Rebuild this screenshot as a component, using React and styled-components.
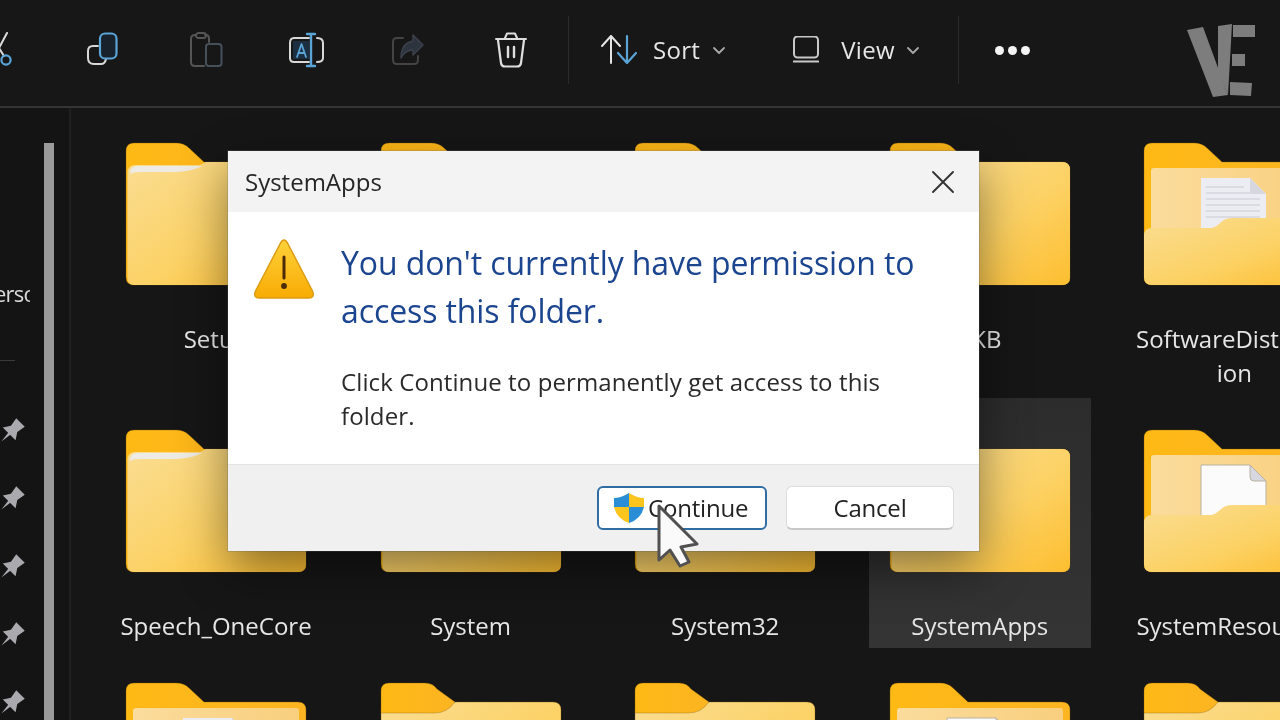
import React, { useId } from "react";
import styled, { createGlobalStyle } from "styled-components";

const Global = createGlobalStyle`
  html, body { margin: 0; padding: 0; background: #161617; }
  * { box-sizing: border-box; }
`;

const FONT = `"Open Sans", "Noto Sans", sans-serif`;

const Page = styled.div`
  width: 1280px;
  height: 720px;
  overflow: hidden;
  position: relative;
  background: #161617;
  font-family: ${FONT};
  display: flex;
  flex-direction: column;
  filter: blur(0.4px);
`;

const Toolbar = styled.header`
  height: 108px;
  flex: none;
  display: flex;
  align-items: center;
  padding-bottom: 6px;
  border-bottom: 2px solid #343435;
  background: #171718;
`;

const IconSlot = styled.span`
  width: 36px;
  height: 36px;
  flex: none;
  display: block;
  margin-right: 66px;
  &:first-child { margin-left: -18px; }
  &:nth-child(5) { margin-right: 67px; }
  &:nth-child(6) { margin-right: 39px; }
  svg { display: block; overflow: visible; }
`;

const Separator = styled.span`
  width: 1px;
  height: 68px;
  flex: none;
  background: #2b2b2c;
  margin-left: ${(p) => p.$left || 0}px;
`;

const MenuButton = styled.span`
  display: flex;
  align-items: center;
  flex: none;
  color: #e6e6e6;
  font-size: 24px;
  margin-left: ${(p) => p.$left}px;
  svg { display: block; flex: none; }
`;

const MenuLabel = styled.span`
  margin: -2px ${(p) => p.$after}px 0 ${(p) => p.$before}px;
  letter-spacing: 0.3px;
`;

const Dots = styled.span`
  display: flex;
  gap: 4px;
  margin-left: 36px;
  flex: none;
`;

const Dot = styled.i`
  width: 9px;
  height: 9px;
  border-radius: 50%;
  background: #f4f4f4;
`;

const Logo = styled.svg`
  margin-left: auto;
  margin-right: 22px;
  margin-top: 22px;
  flex: none;
`;

const Body = styled.div`
  flex: 1;
  display: flex;
  min-height: 0;
`;

const Sidebar = styled.aside`
  width: 71px;
  flex: none;
  display: flex;
  border-right: 2px solid #202021;
  background: #141415;
`;

const SideList = styled.div`
  width: 44px;
  flex: none;
  display: flex;
  flex-direction: column;
`;

const SideLabel = styled.div`
  width: 30px;
  height: 34px;
  margin-top: 168px;
  overflow: hidden;
  white-space: nowrap;
  color: #dadada;
  font-size: 22px;
  line-height: 34px;
  letter-spacing: -0.8px;
  text-indent: -6px;
`;

const SideRule = styled.div`
  width: 15px;
  height: 1px;
  margin-top: 50px;
  background: #3a3a3a;
`;

const Pins = styled.div`
  display: flex;
  flex-direction: column;
  gap: 40px;
  margin-top: 56px;
`;

const Scrollbar = styled.div`
  width: 10px;
  flex: none;
  margin-top: 35px;
  background: #9a9a9a;
`;

const Grid = styled.main`
  flex: 1;
  display: grid;
  grid-template-columns: repeat(5, 222px);
  column-gap: 32.6px;
  row-gap: 3px;
  align-content: start;
  padding: 3px 0 0 34px;
  background: #161617;
`;

const Cell = styled.div`
  padding: 32px 21px 5px;
  background: ${(p) => (p.$selected ? "linear-gradient(180deg,#2c2c2d,#343435)" : "transparent")};
`;

const FolderArt = styled.svg`
  display: block;
  width: 180px;
  height: 142px;
  overflow: visible;
`;

const Label = styled.div`
  margin: 37px -21px 0;
  text-align: center;
  white-space: nowrap;
  color: #e6e6e6;
  font-size: 24px;
  line-height: 34px;
`;

const Dialog = styled.section`
  position: absolute;
  left: 228px;
  top: 151px;
  width: 751px;
  height: 400px;
  display: flex;
  flex-direction: column;
  background: #fff;
  box-shadow: 0 18px 46px rgba(0, 0, 0, 0.46), 0 0 0 1px rgba(130, 130, 130, 0.25);
`;

const DialogHead = styled.div`
  height: 61px;
  flex: none;
  display: flex;
  align-items: center;
  justify-content: space-between;
  padding: 0 24px 0 17px;
  background: #f3f3f3;
`;

const DialogTitle = styled.h2`
  margin: 0;
  font-size: 24px;
  font-weight: 400;
  color: #262626;
`;

const DialogMain = styled.div`
  flex: 1;
  display: flex;
  gap: 26px;
  padding: 26px 25px 0;
`;

const Warning = styled.svg`
  flex: none;
  display: block;
`;

const Copy = styled.div`
  display: flex;
  flex-direction: column;
  padding-top: 1px;
`;

const Heading = styled.h1`
  margin: 0;
  font-size: 32px;
  font-weight: 400;
  line-height: 48px;
  color: #1c4590;
  letter-spacing: -0.1px;
  white-space: nowrap;
`;

const Message = styled.p`
  margin: 30px 0 0;
  font-size: 24px;
  line-height: 34px;
  letter-spacing: 0.1px;
  color: #2a2a2a;
  white-space: nowrap;
`;

const DialogFoot = styled.div`
  height: 87px;
  flex: none;
  display: flex;
  justify-content: flex-end;
  align-items: flex-start;
  gap: 19px;
  padding: 21px 25px 0;
  background: #f0f0f0;
  border-top: 1px solid #e4e4e4;
`;

const Button = styled.div`
  position: relative;
  height: 44px;
  width: ${(p) => p.$w}px;
  display: flex;
  align-items: center;
  justify-content: ${(p) => (p.$primary ? "flex-start" : "center")};
  gap: 3px;
  padding-left: ${(p) => (p.$primary ? 14 : 0)}px;
  padding-bottom: 1px;
  background: #fff;
  border-radius: 6px;
  border: ${(p) => (p.$primary ? "2px solid #2f6da3" : "1px solid #dcdcdc")};
  ${(p) => (p.$primary ? "" : "border-bottom: 2px solid #c8c8c8;")}
  color: #222;
  font-size: 24px;
  letter-spacing: -0.2px;
`;

const Pointer = styled.svg`
  position: absolute;
  left: 57px;
  top: 15px;
  display: block;
  overflow: visible;
`;

const Svg = ({ children, ...rest }) => (
  <svg width="36" height="36" viewBox="0 0 36 36" fill="none" strokeLinecap="round" strokeLinejoin="round" {...rest}>
    {children}
  </svg>
);

const BLUE = "#5aa4d6";

const Scissors = () => (
  <Svg>
    <path d="M25 1 L17 16 L22 24" stroke="#dcdcdc" strokeWidth="2" />
    <circle cx="24" cy="28" r="4.6" stroke={BLUE} strokeWidth="2.2" />
  </Svg>
);
const CopyIcon = () => (
  <Svg>
    <path d="M14 14 H9 Q4 14 4 19 V26 Q4 32 10 32 H17 Q21 32 22 27" stroke="#d8d8d8" strokeWidth="2" />
    <rect x="16" y="1.5" width="16.5" height="25" rx="5" stroke={BLUE} strokeWidth="2.2" fill="#17222c" />
  </Svg>
);
const PasteIcon = () => (
  <Svg>
    <path d="M10 3 H9 Q5 3 5 7 V30 Q5 34 9 34 H18" stroke="#555" strokeWidth="2" />
    <path d="M23 10 V7 Q23 3 20 3 H19" stroke="#555" strokeWidth="2" />
    <rect x="10" y="1" width="10" height="5" rx="2.5" stroke="#555" strokeWidth="1.8" />
    <rect x="20" y="12" width="15.5" height="22" rx="3" stroke="#46505a" strokeWidth="2" />
  </Svg>
);
const RenameIcon = () => (
  <Svg>
    <path d="M21 6 H6 Q2 6 2 11 V26 Q2 30 6 30 H21" stroke="#d8d8d8" strokeWidth="2" />
    <path d="M29 6 Q35 6 35 11 V26 Q35 30 29 30" stroke="#d8d8d8" strokeWidth="2" />
    <rect x="5" y="9" width="16" height="18" fill="#1c2f40" />
    <path d="M9 25 L13.5 12 L18 25 M10.6 21 H16.4" stroke={BLUE} strokeWidth="1.8" />
    <path d="M19 2 H27 M19 34 H27 M23 2 V34" stroke={BLUE} strokeWidth="2.4" />
  </Svg>
);
const ShareIcon = () => (
  <Svg>
    <path d="M13 6 H7 Q3 6 3 10 V28 Q3 32 7 32 H24 Q28 32 28 28 V24" stroke="#444" strokeWidth="2" />
    <path d="M23 3 L33 13 L23 23 V18 Q15 18 11 26 Q11 11 23 9 Z" fill="#2e343e" stroke="#3c424d" strokeWidth="1.4" />
  </Svg>
);
const TrashIcon = () => (
  <Svg>
    <path d="M3 7 H33 M12 6 L14 1.5 H22 L24 6" stroke="#dedede" strokeWidth="2" />
    <path d="M5 8 L8 31 Q8.5 34.5 12 34.5 H24 Q27.5 34.5 28 31 L31 8" stroke="#dedede" strokeWidth="2.2" />
    <path d="M15 15 V25 M21 15 V25" stroke="#dedede" strokeWidth="2.4" />
  </Svg>
);
const SortIcon = () => (
  <svg width="36" height="32" viewBox="0 1 36 32" fill="none" strokeLinecap="round" strokeLinejoin="round">
    <path d="M10 30 V3 M1 13 L10 3 L19 13" stroke="#e4e4e4" strokeWidth="2" />
    <path d="M26 3 V29 M17 20 L26 30 L35 20" stroke={BLUE} strokeWidth="2.2" />
  </svg>
);
const ViewIcon = () => (
  <svg width="28" height="28" viewBox="0 1 28 28" fill="none">
    <rect x="2" y="1.5" width="24" height="21" rx="3.5" stroke="#c8c8c8" strokeWidth="2" />
    <path d="M1 26.5 H27" stroke="#c8c8c8" strokeWidth="2" />
  </svg>
);
const Chevron = () => (
  <svg width="14" height="9" viewBox="0 0 14 9" fill="none">
    <path d="M2 2 L7 7 L12 2" stroke="#a8a8a8" strokeWidth="1.8" strokeLinecap="round" strokeLinejoin="round" />
  </svg>
);

const Pin = () => (
  <svg width="28" height="28" viewBox="0 0 28 28" style={{ display: "block", marginLeft: -2 }}>
    <g transform="rotate(45 14 14)" fill="#a9a9ae">
      <path d="M8 2 H20 L18.5 11 L23 18 H5 L9.5 11 Z" />
      <path d="M12.4 17 H15.6 L14 29 Z" />
    </g>
  </svg>
);

const Folder = ({ type }) => {
  const uid = useId().replace(/[^a-zA-Z0-9]/g, "");
  const tab = `tab${uid}`;
  const front = `front${uid}`;
  const inner = `inner${uid}`;
  const edge = { stroke: "#7c5208", strokeOpacity: 0.4, strokeWidth: 0.8 };
  const docFill = type === "doc" ? "#ecedf2" : "#fbfbfb";
  const docStroke = type === "doc" ? "none" : "#b9b2a2";
  return (
    <FolderArt viewBox="0 0 180 142">
      <defs>
        <linearGradient id={tab} x1="0" y1="0" x2="1" y2="0">
          <stop offset="0" stopColor="#ffb915" />
          <stop offset="1" stopColor="#fcb422" />
        </linearGradient>
        <linearGradient id={front} x1="0" y1="0" x2="1" y2="1">
          <stop offset="0" stopColor="#fadd92" />
          <stop offset="0.55" stopColor="#fcd266" />
          <stop offset="1" stopColor="#fdbe30" />
        </linearGradient>
        <linearGradient id={inner} x1="0" y1="0" x2="1" y2="0">
          <stop offset="0" stopColor="#fbdc9c" />
          <stop offset="1" stopColor="#f8cf7e" />
        </linearGradient>
      </defs>
      {type !== "wave" && (
        <path d="M8 0 H50 Q58 0 63 5 L78 19 H172 Q180 19 180 27 V134 Q180 142 172 142 H8 Q0 142 0 134 V8 Q0 0 8 0 Z" fill={`url(#${tab})`} {...edge} />
      )}
      {type === "plain" && (
        <>
          <path d="M1.5 30 Q1.5 22 10 22 H74 L80 19 H172 Q180 19 180 27 V134 Q180 142 172 142 H8 Q1.5 142 1.5 134 Z" fill={`url(#${front})`} />
          <path d="M4 31 Q4 23 11 23 H76 Q68 28 50 29 H14 Q7 29 4 31 Z" fill="#eeeae4" />
        </>
      )}
      {type === "wave" && (
        <>
          <path d="M6 19 H172 Q180 19 180 27 V134 Q180 142 172 142 H8 Q0 142 0 134 V27 Z" fill={`url(#${front})`} {...edge} />
          <path d="M8 0 H44 Q52 0 56 6 L74 19 Q66 30 54 30 H0 V8 Q0 0 8 0 Z" fill={`url(#${tab})`} {...edge} />
        </>
      )}
      {(type === "doc" || type === "blank") && (
        <>
          <rect x="7" y="25" width="166" height="64" rx="3" fill={`url(#${inner})`} />
          <path d="M57 35 H106 L122 51 V90 H57 Z" fill={docFill} stroke={docStroke} strokeWidth="1" />
          {type === "doc" && (
            <path d="M62 44 H100 M62 50 H116 M62 56 H116 M62 62 H116 M62 68 H116 M62 74 H116" stroke="#d5d6de" strokeWidth="1.4" />
          )}
          <path d="M106 35 V47 Q106 51 110 51 H122 Z" fill="#d7d7df" stroke={docStroke} strokeWidth="1" />
          <path d="M0 93 Q0 85 8 85 H66 Q71 85 76 80 Q81 75 88 75 H172 Q180 75 180 83 V134 Q180 142 172 142 H8 Q0 142 0 134 Z" fill={`url(#${front})`} />
        </>
      )}
    </FolderArt>
  );
};

const Shield = () => (
  <svg width="32" height="32" viewBox="0 0 32 32" style={{ flex: "none", display: "block" }}>
    <path d="M16 1 Q8 6 1 6 V15 H16 Z" fill="#2a8ed6" />
    <path d="M16 1 Q24 6 31 6 V15 H16 Z" fill="#fcc51e" />
    <path d="M1 15 H16 V31 Q4 27 1 15 Z" fill="#fcc51e" />
    <path d="M31 15 H16 V31 Q28 27 31 15 Z" fill="#2a8ed6" />
  </svg>
);

const items = [
  { name: ["Setup"], type: "plain" },
  { name: [], type: "plain" },
  { name: [], type: "plain" },
  { name: ["SKB"], type: "plain" },
  { name: ["SoftwareDistribut", "ion"], type: "doc" },
  { name: ["Speech_OneCore"], type: "plain" },
  { name: ["System"], type: "plain" },
  { name: ["System32"], type: "plain" },
  { name: ["SystemApps"], type: "plain", selected: true },
  { name: ["SystemResources"], type: "blank" },
  { name: [], type: "doc" },
  { name: [], type: "wave" },
  { name: [], type: "wave" },
  { name: [], type: "blank" },
  { name: [], type: "wave" },
];

export default function App() {
  return (
    <Page>
      <Global />
      <Toolbar>
        <IconSlot><Scissors /></IconSlot>
        <IconSlot><CopyIcon /></IconSlot>
        <IconSlot><PasteIcon /></IconSlot>
        <IconSlot><RenameIcon /></IconSlot>
        <IconSlot><ShareIcon /></IconSlot>
        <IconSlot><TrashIcon /></IconSlot>
        <Separator />
        <MenuButton $left={32}>
          <SortIcon />
          <MenuLabel $before={16} $after={12}>Sort</MenuLabel>
          <Chevron />
        </MenuButton>
        <MenuButton $left={66}>
          <ViewIcon />
          <MenuLabel $before={21} $after={11}>View</MenuLabel>
          <Chevron />
        </MenuButton>
        <Separator $left={38} />
        <Dots><Dot /><Dot /><Dot /></Dots>
        <Logo width="72" height="76" viewBox="0 0 72 76" fill="#7d7d7e">
          <path d="M1 7 L17 4 L42 72 L27 74 Z" />
          <path d="M32 3 L46 1 L42 72 L32 47 Z" />
          <path d="M47 2 H69 V14 L47 14 Z" />
          <path d="M46 31 H59 V43 H46 Z" />
          <path d="M44 59 L66 60 L65 73 L44 72 Z" />
        </Logo>
      </Toolbar>
      <Body>
        <Sidebar>
          <SideList>
            <SideLabel>ersonal</SideLabel>
            <SideRule />
            <Pins>
              <Pin /><Pin /><Pin /><Pin /><Pin />
            </Pins>
          </SideList>
          <Scrollbar />
        </Sidebar>
        <Grid>
          {items.map((it, i) => (
            <Cell key={i} $selected={it.selected}>
              <Folder type={it.type} />
              {it.name.length > 0 && (
                <Label>
                  {it.name.map((line) => (
                    <div key={line}>{line}</div>
                  ))}
                </Label>
              )}
            </Cell>
          ))}
        </Grid>
      </Body>
      <Dialog>
        <DialogHead>
          <DialogTitle>SystemApps</DialogTitle>
          <svg width="24" height="24" viewBox="0 0 24 24" fill="none" style={{ display: "block" }}>
            <path d="M2 2 L22 22 M22 2 L2 22" stroke="#333" strokeWidth="1.9" strokeLinecap="round" />
          </svg>
        </DialogHead>
        <DialogMain>
          <Warning width="62" height="62" viewBox="0 0 62 62">
            <defs>
              <linearGradient id="warnFill" x1="0" y1="0" x2="0" y2="1">
                <stop offset="0" stopColor="#fed23a" />
                <stop offset="1" stopColor="#f8ab04" />
              </linearGradient>
            </defs>
            <path d="M31 2 Q33 2 35 6 L59.5 53 Q62 60 56 60 H6 Q0 60 2.5 53 L27 6 Q29 2 31 2 Z" fill="url(#warnFill)" stroke="#dc9c14" strokeWidth="1.5" />
            <path d="M31 19 V40" stroke="#4d2b08" strokeWidth="3" strokeLinecap="round" />
            <circle cx="31" cy="48" r="2.9" fill="#4d2b08" />
          </Warning>
          <Copy>
            <Heading>You don't currently have permission to<br />access this folder.</Heading>
            <Message>Click Continue to permanently get access to this<br />folder.</Message>
          </Copy>
        </DialogMain>
        <DialogFoot>
          <Button $primary $w={170}>
            <Shield />
            <span>Continue</span>
            <Pointer width="44" height="66" viewBox="0 0 44 66">
              <path d="M3 3 V57 L14 47 L24 63 L33 59 L25 44 L41 41 Z" fill="#fafafa" stroke="#505050" strokeWidth="3" strokeLinejoin="round" />
            </Pointer>
          </Button>
          <Button $w={168}>Cancel</Button>
        </DialogFoot>
      </Dialog>
    </Page>
  );
}
